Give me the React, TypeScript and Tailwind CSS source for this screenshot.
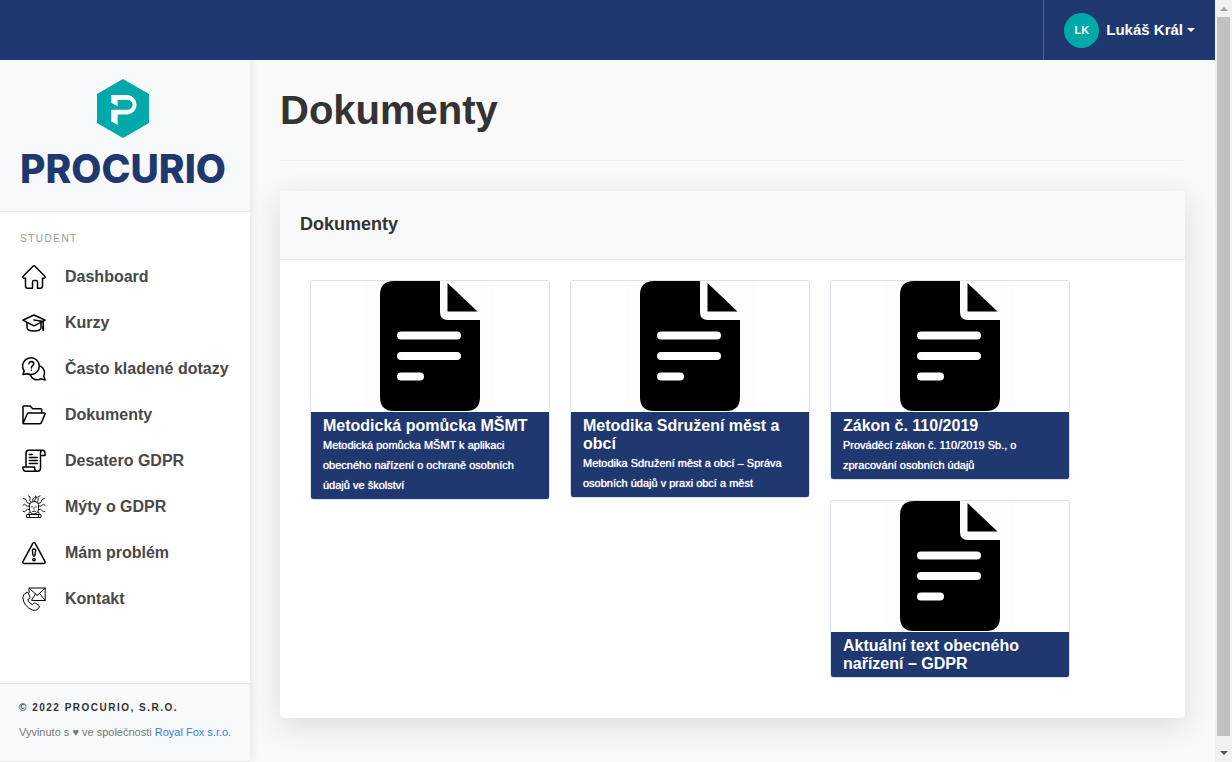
import React from "react";

interface IconProps {
  children: React.ReactNode;
}

interface DocumentItem {
  title: string;
  description?: string;
}

const Icon = ({ children }: IconProps) => (
  <svg
    viewBox="0 0 24 24"
    className="size-6 shrink-0 text-black"
    fill="none"
    stroke="currentColor"
    strokeWidth="1.5"
    strokeLinecap="round"
    strokeLinejoin="round"
    aria-hidden="true"
  >
    {children}
  </svg>
);

const navItems = [
  {
    label: "Dashboard",
    icon: (
      <path d="M3.500 13.300H2q-2-.6-.6-2.300L11 1.200q1-.8 2 0l9.600 9.800q1.400 1.700-.6 2.300h-1.500v7.700q0 2.200-2.200 2.200h-2.800V17q0-1.500-1.500-1.500h-2q-1.500 0-1.500 1.500v6.200H5.700q-2.200 0-2.200-2.200z" />
    ),
  },
  {
    label: "Kurzy",
    icon: (
      <>
        <path d="M.8 9.200 12 4l11.200 5.200L12 14.800z" />
        <path d="M5 11.500v5q0 3.500 7 3.500t7-3.500v-5" />
        <path d="m12 9 9.200 1.400V18" />
        <path d="M21.200 16v3" strokeWidth="2" />
      </>
    ),
  },
  {
    label: "Často kladené dotazy",
    icon: (
      <>
        <path d="M1 17.500 2.200 14A8.300 8.300 0 1 1 5.500 16.700z" />
        <path d="M18.500 9.200A7.200 7.200 0 0 1 21.700 19l1.400 4-4.500-1.200a7.200 7.200 0 0 1-10.400-4" />
        <path d="M7 6.800q.2-2.200 2.400-2.200 2.300.1 2.300 2.200 0 1.100-1.200 1.900Q9.400 9.400 9.400 11" />
        <path d="M9.400 13.200v.1" />
      </>
    ),
  },
  {
    label: "Dokumenty",
    icon: (
      <path d="M1 20.500V3.800q0-.8.800-.8h6.400l2.500 2.800h8q1 0 1 1V10M1 20.500 5.200 11q.4-1 1.400-1h15.600q1.200 0 .8 1.100l-3.600 8.400q-.4 1.200-1.700 1.200H1.500z" />
    ),
  },
  {
    label: "Desatero GDPR",
    icon: (
      <>
        <path d="M4 17V4.500Q4 1.200 6.500 1.200h14q-2 0-2 2.300V19q0 3.300-3 3.300H3.800Q1 22.300 1 18.500V18h11.500q0 4.300 3 4.300M20.500 1.200q2.500 0 2.500 3.300v2h-4.300" />
        <path d="M7.300 5.500h3M7.300 8.500h8M7.300 11.500h8M7.300 14.500h8" />
      </>
    ),
  },
  {
    label: "Mýty o GDPR",
    icon: (
      <g strokeWidth="0.9">
        <path d="M7.500 9.500Q8 6.500 12 6.500t4.500 3v5.500q-.8 4-4.500 4t-4.500-4z" />
        <path d="M9.500 11.800h.8M13.700 11.800h.8M12 12.500v1.500M10.500 16.500q1.500-1 3 0" />
        <path d="M9 7Q7 5.500 8 3.500T6.500.8M8 8.500Q4.500 8.500 4.500 6T1.500 3.500M7.500 11Q4.500 12 3.500 10T.8 10.500M7.500 14.500q-2.500-1-3.500 1T1 16.500" />
        <path d="M11 6.500Q9.800 3 12 3t1.500-2.200q2 1.800 0 3.200T13.200 6.500M15 7q2-1.500 1-3.500T18 .8M16 8.500q3.500 0 3.500-2.500T22.500 3.500M16.500 11q3 1 4-1T23.200 10.500M16.500 14.500q2.500-1 3.500 1T23 16.500" />
        <path d="M5 19.500h14v3H5zM7.500 19.500v3M16.500 19.500v3M7.500 17l-1 2.500M16.500 17l1 2.500" />
      </g>
    ),
  },
  {
    label: "Mám problém",
    icon: (
      <>
        <path d="M10.800 2.400q1.200-1.700 2.400 0l9.600 17.700q.9 2.200-1.300 2.400h-19q-2.200-.2-1.300-2.400z" />
        <path
          d="M12 8q-2 .2-1.600 2.200l.7 4.300q.9 1.500 1.800 0l.7-4.300Q14 8.200 12 8z"
          strokeWidth="1.4"
        />
        <circle cx="12" cy="18.600" r="1.200" strokeWidth="1.400" />
      </>
    ),
  },
  {
    label: "Kontakt",
    icon: (
      <g strokeWidth="1">
        <path d="M7 5.500V1h16.200v12.500H12M7 1l8.200 7.500L23.200 1M23.200 13.500l-5.700-7M12 13.500l-2.500-.2 4-6.300" />
        <path d="M4.600 5.500Q.8 7 .8 10.500q.8 9 10 12.700 4.500.8 6.500-3.200.5-1-.5-1.700l-3.500-2.200q-1-.5-1.800.3l-1.200 1.300q-3.500-1.700-4.600-5l1.600-1q1-.7.600-1.800L6.300 6q-.6-1-1.700-.5z" />
      </g>
    ),
  },
];

const columns: DocumentItem[][] = [
  [
    {
      title: "Metodická pomůcka MŠMT",
      description:
        "Metodická pomůcka MŠMT k aplikaci obecného nařízení o ochraně osobních údajů ve školství",
    },
  ],
  [
    {
      title: "Metodika Sdružení měst a obcí",
      description:
        "Metodika Sdružení měst a obcí – Správa osobních údajů v praxi obcí a měst",
    },
  ],
  [
    {
      title: "Zákon č. 110/2019",
      description: "Prováděcí zákon č. 110/2019 Sb., o zpracování osobních údajů",
    },
    { title: "Aktuální text obecného nařízení – GDPR" },
  ],
];

const Header = () => (
  <header className="relative z-20 flex h-[60px] shrink-0 justify-end bg-[#203870]">
    <button
      type="button"
      className="flex items-center border-l border-[#53658f] px-5 text-[15px] font-bold text-white"
    >
      <span className="mr-[7px] flex size-[35px] items-center justify-center rounded-full bg-[#00a9a9] text-[11px]">
        LK
      </span>
      Lukáš Král
      <span className="ml-1 border-x-4 border-t-4 border-x-transparent border-t-white" />
    </button>
  </header>
);

const Logo = () => (
  <a
    href="#"
    className="flex h-[152px] shrink-0 flex-col items-center border-b border-[#e9ebee] bg-[#f8f9fb] pt-[19px] pr-1 text-[#203870]"
  >
    <svg viewBox="0 0 52 59" className="h-[59px] w-[52px]" aria-hidden="true">
      <path d="M26 0 52 15v29L26 59 0 44V15z" fill="#00a9a9" />
      <path
        d="M14.300 16h16.500a9.800 9.800 0 0 1 0 19.500H20.600V46l-6.300-3.500V30.700h16.500a4.800 4.800 0 0 0 0-9.700H20.600v6.300l-6.300-3.500z"
        fill="#fff"
      />
    </svg>
    <span className="mt-2 font-[Inter,sans-serif] text-[39px] leading-[46px] font-extrabold">
      PROCURIO
    </span>
  </a>
);

const Sidebar = () => (
  <aside className="z-10 flex w-[250px] shrink-0 flex-col bg-white shadow-[0_0_10px_rgba(0,0,0,0.1)]">
    <Logo />
    <nav className="flex-1 px-5 pt-[21px]">
      <h2 className="text-[10px] leading-3 tracking-[0.15em] text-[#9a9a9a]">
        STUDENT
      </h2>
      <ul className="mt-[9px]">
        {navItems.map((item) => (
          <li key={item.label}>
            <a
              href="#"
              className="flex h-[46px] items-center gap-[19px] pl-0.5 font-bold whitespace-nowrap text-[#484848]"
            >
              <Icon>{item.icon}</Icon>
              {item.label}
            </a>
          </li>
        ))}
      </ul>
    </nav>
    <footer className="border-y border-[#e3e5e8] bg-[#f8f9fb] px-[19px] pt-3 pb-[17px] text-[11px] leading-6 whitespace-nowrap text-[#777]">
      <p className="text-[10px] font-bold tracking-[0.15em] text-[#333]">
        © 2022 PROCURIO, S.R.O.
      </p>
      <p>
        Vyvinuto s ♥ ve společnosti{" "}
        <a href="#" className="text-[#2f80ed]">
          Royal Fox s.r.o.
        </a>
      </p>
    </footer>
  </aside>
);

const DocumentCard = ({ title, description }: DocumentItem) => (
  <a
    href="#"
    className="block w-60 overflow-hidden rounded-[3px] border border-[#d9e0ee] bg-white"
  >
    <svg
      viewBox="0 0 130 130"
      className="mx-auto mb-px size-[130px] bg-[#fdfdfd]"
      aria-hidden="true"
    >
      <path d="M29 0h46v31q0 8 8 8h32v77q0 14-14 14H29q-14 0-14-14V14Q15 0 29 0z" />
      <path d="M82.500 2v28.500h30z" />
      <path
        d="M36 54.500h56M36 75h56M36 95.500h19"
        stroke="#fff"
        strokeWidth="8"
        strokeLinecap="round"
      />
    </svg>
    <div className="bg-[#203870] px-3 pt-[5px] pb-1 text-white">
      <h3 className="leading-[18px] font-bold">{title}</h3>
      {description && (
        <p className="text-[11px] leading-5 [text-shadow:0_0_1px_#fff]">
          {description}
        </p>
      )}
    </div>
  </a>
);

const Scrollbar = () => (
  <div
    className="flex w-[17px] shrink-0 flex-col items-center bg-[#f1f1f1]"
    aria-hidden="true"
  >
    <div className="flex h-[17px] items-center">
      <span className="border-x-4 border-b-4 border-x-transparent border-b-[#a3a3a3]" />
    </div>
    <div className="w-[13px] flex-1 bg-[#c1c1c1]" />
    <div className="flex h-[26px] items-end pb-[7px]">
      <span className="border-x-4 border-t-4 border-x-transparent border-t-[#505050]" />
    </div>
  </div>
);

const App = () => {
  return (
    <div className="flex min-h-screen bg-[#f9f9f9] font-['Liberation_Sans',Arial,sans-serif]">
      <div className="flex min-w-0 flex-1 flex-col">
        <Header />
        <div className="flex flex-1">
          <Sidebar />
          <main className="min-w-0 flex-1 px-[30px] pt-[26px] pb-11 text-[#333]">
            <h1 className="border-b border-[#eee] pb-[26px] text-[40px] leading-[48px] font-bold">
              Dokumenty
            </h1>
            <section className="mt-[30px] overflow-hidden rounded bg-white shadow-[0_8px_30px_rgba(0,0,0,0.12)]">
              <h2 className="border-b border-[#e9ebee] bg-[#f8f9fb] px-5 pt-5 pb-[22px] text-lg leading-[26px] font-bold">
                Dokumenty
              </h2>
              <div className="flex flex-wrap items-start gap-5 px-[30px] pt-5 pb-10">
                {columns.map((column) => (
                  <div key={column[0].title} className="flex flex-col gap-5">
                    {column.map((item) => (
                      <DocumentCard key={item.title} {...item} />
                    ))}
                  </div>
                ))}
              </div>
            </section>
          </main>
        </div>
      </div>
      <Scrollbar />
    </div>
  );
};

export default App;
